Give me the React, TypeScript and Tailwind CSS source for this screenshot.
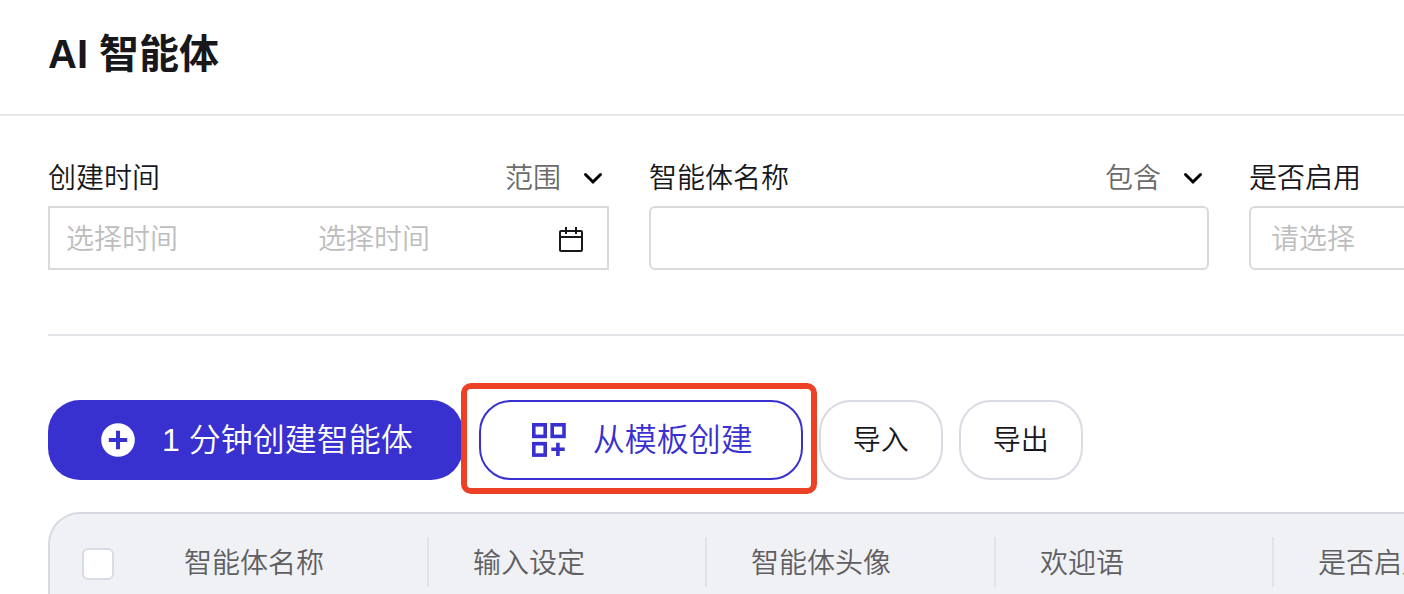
import React from 'react';

const columns = [
  { label: '智能体名称', width: 'w-[289px]' },
  { label: '输入设定', width: 'w-[278px]' },
  { label: '智能体头像', width: 'w-[289px]' },
  { label: '欢迎语', width: 'w-[278px]' },
  { label: '是否启用', width: 'w-[278px]' },
];

function ChevronIcon({ className }: { className: string }) {
  return (
    <svg aria-hidden="true" viewBox="0 0 20 20" className={`h-5 w-5 ${className}`} fill="none" stroke="currentColor" strokeWidth="3">
      <path d="M2.500 6.500 10 14l7.500-7.500" strokeLinecap="round" strokeLinejoin="miter" />
    </svg>
  );
}

function CalendarIcon() {
  return (
    <svg aria-hidden="true" viewBox="0 0 28 28" className="h-7 w-7" fill="none" stroke="currentColor" strokeWidth="2">
      <rect x="3" y="6" width="22" height="20" rx="1" />
      <path d="M3 12h22M9 2v7M19 2v7" />
    </svg>
  );
}

function PlusCircleIcon() {
  return (
    <svg aria-hidden="true" viewBox="0 0 40 40" className="h-10 w-10">
      <circle cx="20" cy="20" r="16.800" fill="currentColor" />
      <path d="M20 10.800v18.400M10.800 20h18.400" stroke="#3930d0" strokeWidth="4" />
    </svg>
  );
}

function TemplateIcon() {
  return (
    <svg aria-hidden="true" viewBox="0 0 40 40" className="h-10 w-10" fill="none" stroke="currentColor" strokeWidth="3.600">
      <rect x="4.800" y="4.800" width="11.400" height="11.600" />
      <rect x="23.200" y="4.800" width="11.800" height="11.600" />
      <rect x="4.800" y="23.700" width="11.400" height="11.400" />
      <path d="M28.900 22.700v13.300M22.300 29.300h13.400" />
    </svg>
  );
}

function Operator({ id, label, value }: { id: string; label: string; value: string }) {
  return (
    <div className="grid items-center text-[#6b6b6b]">
      <select id={id} aria-label={label} className="col-start-1 row-start-1 appearance-none bg-transparent pt-0.5 pr-[47px] leading-10 outline-none">
        <option>{value}</option>
      </select>
      <ChevronIcon className="pointer-events-none col-start-1 row-start-1 mr-1.5 justify-self-end text-black" />
    </div>
  );
}

export default function App() {
  return (
    <main
      lang="zh-CN"
      className="h-screen overflow-hidden bg-white font-['Liberation_Sans','Noto_Sans_CJK_SC',sans-serif] text-[28px] leading-10 font-[350] text-[#17171c]"
    >
      <header className="border-b-2 border-[#e6e6ec] px-12 pt-[26px] pb-8">
        <h1 className="text-[40px] leading-14 font-bold">AI 智能体</h1>
      </header>

      <div className="pl-12">
        <form className="flex gap-10 border-b-2 border-[#e2e2e7] pt-10 pb-16">
          <div className="w-[561px] shrink-0">
            <div className="flex h-[50px] items-center justify-between pb-1.5">
              <label htmlFor="start" className="pt-0.5">创建时间</label>
              <Operator id="time-op" label="创建时间条件" value="范围" />
            </div>
            <div className="flex h-16 items-center border-2 border-[#dadada] pr-[22px] pl-4">
              <input id="start" placeholder="选择时间" className="w-[252px] bg-transparent pt-1 outline-none placeholder:text-[#bdbdbd]" />
              <input aria-label="结束时间" placeholder="选择时间" className="min-w-0 flex-1 bg-transparent pt-1 outline-none placeholder:text-[#bdbdbd]" />
              <button type="button" aria-label="打开日历" className="pt-0.5">
                <CalendarIcon />
              </button>
            </div>
          </div>

          <div className="w-[560px] shrink-0">
            <div className="flex h-[50px] items-center justify-between pb-1.5">
              <label htmlFor="name" className="pt-0.5">智能体名称</label>
              <Operator id="name-op" label="智能体名称条件" value="包含" />
            </div>
            <input id="name" className="block h-16 w-full rounded-md border-2 border-[#dadada] px-5 outline-none" />
          </div>

          <div className="w-[560px] shrink-0">
            <div className="flex h-[50px] items-center pb-1.5">
              <label htmlFor="enabled" className="pt-0.5">是否启用</label>
            </div>
            <select id="enabled" className="block h-16 w-full appearance-none rounded-md border-2 border-[#dadada] bg-white px-5 pt-1 text-[#bdbdbd] outline-none">
              <option>请选择</option>
            </select>
          </div>
        </form>

        <div className="flex gap-4 pt-16 pb-8 whitespace-nowrap">
          <button type="button" className="flex h-20 shrink-0 items-center gap-6 rounded-[32px] bg-[#3930d0] px-[50px] text-[32px] text-white">
            <PlusCircleIcon />
            1 分钟创建智能体
          </button>
          <div className="relative shrink-0">
            <button type="button" className="flex h-20 items-center gap-6 rounded-[32px] border-2 border-[#3930d0] px-12 text-[32px] text-[#3930d0]">
              <TemplateIcon />
              从模板创建
            </button>
            <div className="pointer-events-none absolute -top-[17px] -right-3.5 -bottom-3.5 -left-[18px] rounded-[10px] border-6 border-[#ec4125]" />
          </div>
          <button type="button" className="h-20 shrink-0 rounded-[32px] border-2 border-[#d8dbe2] px-8 pt-0.5">导入</button>
          <button type="button" className="h-20 shrink-0 rounded-[32px] border-2 border-[#d8dbe2] px-8 pt-0.5">导出</button>
        </div>

        <div className="overflow-hidden rounded-tl-[32px] border-t-2 border-l-2 border-[#d6dae0] bg-[#f0f1f5]">
          <table className="w-[1502px] table-fixed text-left text-[#5f5f62]">
            <thead>
              <tr className="h-24">
                <th className="w-[90px] pl-8">
                  <input type="checkbox" aria-label="全选" className="mt-1 block h-8 w-8 appearance-none rounded-md border-2 border-[#d8dce3] bg-white" />
                </th>
                {columns.map((column) => (
                  <th key={column.label} className={`${column.width} p-0 font-[350]`}>
                    <div className="flex h-[50px] items-center border-r-2 border-[#e2e3e8] pt-1 pl-11">{column.label}</div>
                  </th>
                ))}
              </tr>
            </thead>
          </table>
        </div>
      </div>
    </main>
  );
}
